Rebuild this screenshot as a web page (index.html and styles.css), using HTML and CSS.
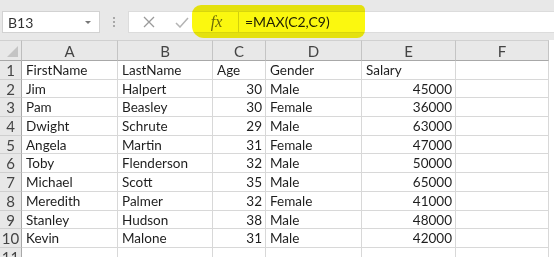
FILE: index.html
```html
<!DOCTYPE html>
<html lang="en">
<head>
    <meta charset="UTF-8">
    <title>Employees - Excel</title>
    <link rel="stylesheet" href="styles.css">
</head>
<body>

    <!-- Formula bar -->
    <div class="toolbar">
        <div class="name-box">
            <span>B13</span>
            <span class="caret"></span>
        </div>
        <div class="grip"><i></i><i></i><i></i></div>
        <div class="formula-box">
            <div class="fbtn">
                <svg width="12" height="12" viewBox="0 0 12 12"><path d="M1 1 L11 11 M11 1 L1 11" stroke="#9a9a9a" stroke-width="1.3" fill="none"/></svg>
            </div>
            <div class="fbtn">
                <svg width="14" height="11" viewBox="0 0 14 11"><path d="M1 6 L5 10 L13 1" stroke="#b4b4b4" stroke-width="1.5" fill="none"/></svg>
            </div>
            <div class="fbtn fx">fx</div>
            <div class="formula-input">=MAX(C2,C9)</div>
        </div>
        <div class="highlight"></div>
    </div>

    <!-- Sheet -->
    <div class="sheet">
        <div class="corner"><span class="tri"></span></div>
        <div class="col-head">A</div>
        <div class="col-head">B</div>
        <div class="col-head">C</div>
        <div class="col-head">D</div>
        <div class="col-head">E</div>
        <div class="col-head">F</div>

        <div class="row-head">1</div>
        <div class="cell">FirstName</div><div class="cell">LastName</div><div class="cell">Age</div><div class="cell">Gender</div><div class="cell">Salary</div><div class="cell"></div>

        <div class="row-head">2</div>
        <div class="cell">Jim</div><div class="cell">Halpert</div><div class="cell num">30</div><div class="cell">Male</div><div class="cell num">45000</div><div class="cell"></div>

        <div class="row-head">3</div>
        <div class="cell">Pam</div><div class="cell">Beasley</div><div class="cell num">30</div><div class="cell">Female</div><div class="cell num">36000</div><div class="cell"></div>

        <div class="row-head">4</div>
        <div class="cell">Dwight</div><div class="cell">Schrute</div><div class="cell num">29</div><div class="cell">Male</div><div class="cell num">63000</div><div class="cell"></div>

        <div class="row-head">5</div>
        <div class="cell">Angela</div><div class="cell">Martin</div><div class="cell num">31</div><div class="cell">Female</div><div class="cell num">47000</div><div class="cell"></div>

        <div class="row-head">6</div>
        <div class="cell">Toby</div><div class="cell">Flenderson</div><div class="cell num">32</div><div class="cell">Male</div><div class="cell num">50000</div><div class="cell"></div>

        <div class="row-head">7</div>
        <div class="cell">Michael</div><div class="cell">Scott</div><div class="cell num">35</div><div class="cell">Male</div><div class="cell num">65000</div><div class="cell"></div>

        <div class="row-head">8</div>
        <div class="cell">Meredith</div><div class="cell">Palmer</div><div class="cell num">32</div><div class="cell">Female</div><div class="cell num">41000</div><div class="cell"></div>

        <div class="row-head">9</div>
        <div class="cell">Stanley</div><div class="cell">Hudson</div><div class="cell num">38</div><div class="cell">Male</div><div class="cell num">48000</div><div class="cell"></div>

        <div class="row-head">10</div>
        <div class="cell">Kevin</div><div class="cell">Malone</div><div class="cell num">31</div><div class="cell">Male</div><div class="cell num">42000</div><div class="cell"></div>

        <div class="row-head">11</div>
        <div class="cell"></div><div class="cell"></div><div class="cell"></div><div class="cell"></div><div class="cell"></div><div class="cell"></div>
    </div>

</body>
</html>
```

FILE: styles.css
```css
* {
    box-sizing: border-box;
}
body {
    margin: 0;
    background: #ffffff;
    font-family: Lato, "Liberation Sans", sans-serif;
    color: #1e1e1e;
    overflow: hidden;
}

/* formula bar */
.toolbar {
    position: relative;
    height: 40px;
    background: #e8e8e8;
    display: flex;
    align-items: flex-start;
    padding: 11px 0 0 2px;
}
.name-box {
    width: 98px;
    height: 22px;
    background: #fff;
    border: 1px solid #d2d2d2;
    display: flex;
    align-items: center;
    justify-content: space-between;
    padding: 0 8px 0 5px;
    font-size: 14px;
    color: #333;
}
.caret {
    width: 0;
    height: 0;
    border-left: 3px solid transparent;
    border-right: 3px solid transparent;
    border-top: 3px solid #777;
}
.grip {
    width: 28px;
    height: 22px;
    display: flex;
    flex-direction: column;
    align-items: center;
    justify-content: center;
    gap: 2px;
}
.grip i {
    width: 2px;
    height: 2px;
    background: #a8a8a8;
}
.formula-box {
    flex: 1;
    height: 22px;
    background: #fff;
    border-top: 1px solid #dcdcdc;
    border-bottom: 1px solid #dcdcdc;
    border-left: 1px solid #dcdcdc;
    display: flex;
    align-items: center;
    padding-left: 3px;
}
.fbtn {
    width: 33px;
    height: 20px;
    display: flex;
    align-items: center;
    justify-content: center;
}
.fx {
    width: 43px;
    margin-left: -3px;
    font-family: "Liberation Serif", serif;
    font-style: italic;
    font-size: 16px;
    color: #6e6e6e;
}
.formula-input {
    flex: 1;
    height: 20px;
    border-left: 1px solid #d6d6d6;
    padding-left: 6px;
    font-size: 14px;
    line-height: 20px;
    color: #222;
}
.highlight {
    position: absolute;
    left: 192px;
    top: 5px;
    width: 173px;
    height: 33px;
    background: #fbf80f;
    border-radius: 9px 5px 8px 12px;
    mix-blend-mode: multiply;
}

/* sheet grid */
.sheet {
    display: grid;
    grid-template-columns: 22px 96px 95px 53px 96px 94px 93px;
    grid-template-rows: 21px repeat(11, 18.7px);
    font-size: 13.5px;
}
.corner {
    position: relative;
    background: #e8e8e8;
    border-top: 1px solid #d0d0d0;
    border-right: 1px solid #bdbdbd;
    border-bottom: 1px solid #a8a8a8;
}
.tri {
    position: absolute;
    right: 3px;
    bottom: 3px;
    width: 0;
    height: 0;
    border-left: 11px solid transparent;
    border-bottom: 11px solid #c4c4c4;
}
.col-head {
    background: #e8e8e8;
    border-top: 1px solid #d0d0d0;
    border-right: 1px solid #c4c4c4;
    border-bottom: 1px solid #a8a8a8;
    text-align: center;
    font-size: 15px;
    line-height: 20px;
    color: #444;
}
.row-head {
    background: #e8e8e8;
    border-right: 1px solid #a8a8a8;
    border-bottom: 1px solid #cfcfcf;
    text-align: center;
    font-size: 15px;
    line-height: 19px;
    color: #444;
}
.cell {
    border-right: 1px solid #d8d8d8;
    border-bottom: 1px solid #d8d8d8;
    padding: 0 3px 0 4px;
    line-height: 19px;
    white-space: nowrap;
    overflow: hidden;
}
.num {
    text-align: right;
}
```
